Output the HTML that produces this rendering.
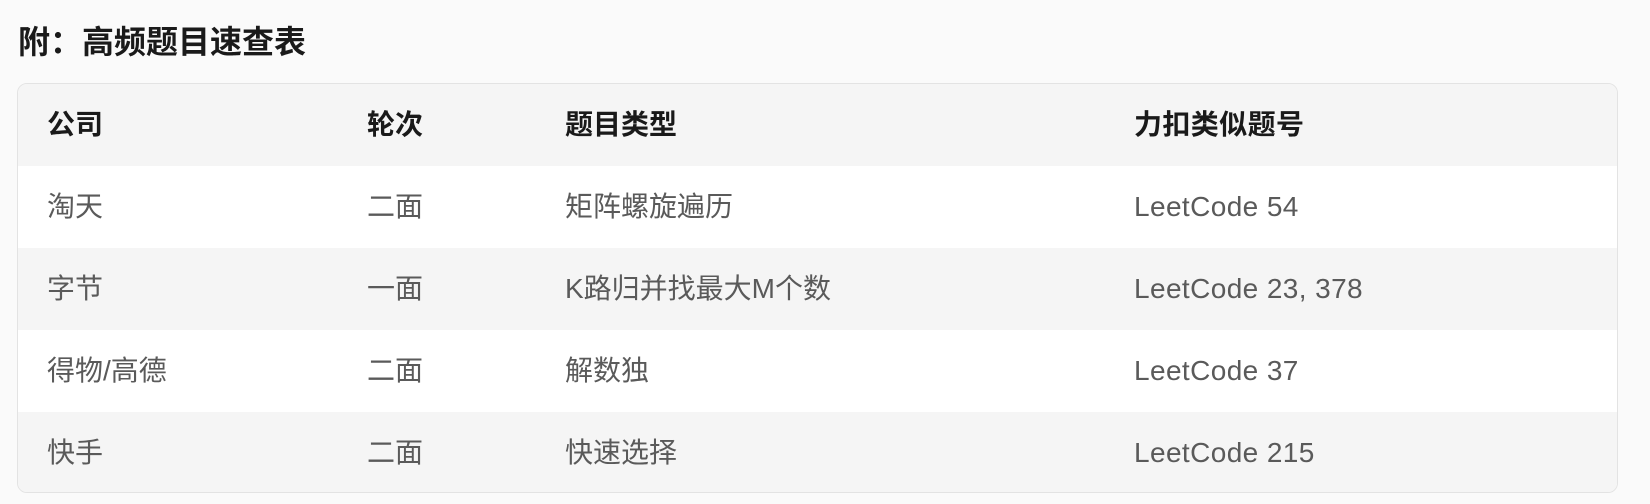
<!DOCTYPE html>
<html><head><meta charset="utf-8"><style>
html,body{margin:0;padding:0;background:#fafafa;width:1650px;height:504px;overflow:hidden;font-family:"Liberation Sans","Noto Sans CJK SC",sans-serif;}
h2{position:absolute;left:18px;top:22px;margin:0;font-size:32px;font-weight:bold;color:#1a1a1a;line-height:40px;}
.t{position:absolute;left:17px;top:83px;width:1601px;height:410px;border:1px solid #e3e3e3;border-radius:10px;overflow:hidden;box-sizing:border-box;background:#fff;}
.r{position:relative;height:82px;font-size:28px;color:#5a5a5a;}
.r span{position:absolute;top:0;line-height:82px;}
.r .d{letter-spacing:0.4px;}
.r.g{background:#f5f5f5;}
.r.h{font-weight:bold;color:#1a1a1a;}
.a{left:29px}.b{left:349px}.c{left:547px}.d{left:1116px}
</style></head><body>
<h2>附：高频题目速查表</h2>
<div class="t">
<div class="r g h"><span class="a">公司</span><span class="b">轮次</span><span class="c">题目类型</span><span class="d">力扣类似题号</span></div>
<div class="r"><span class="a">淘天</span><span class="b">二面</span><span class="c">矩阵螺旋遍历</span><span class="d">LeetCode 54</span></div>
<div class="r g"><span class="a">字节</span><span class="b">一面</span><span class="c">K路归并找最大M个数</span><span class="d">LeetCode 23, 378</span></div>
<div class="r"><span class="a">得物/高德</span><span class="b">二面</span><span class="c">解数独</span><span class="d">LeetCode 37</span></div>
<div class="r g"><span class="a">快手</span><span class="b">二面</span><span class="c">快速选择</span><span class="d">LeetCode 215</span></div>
</div>
</body></html>
